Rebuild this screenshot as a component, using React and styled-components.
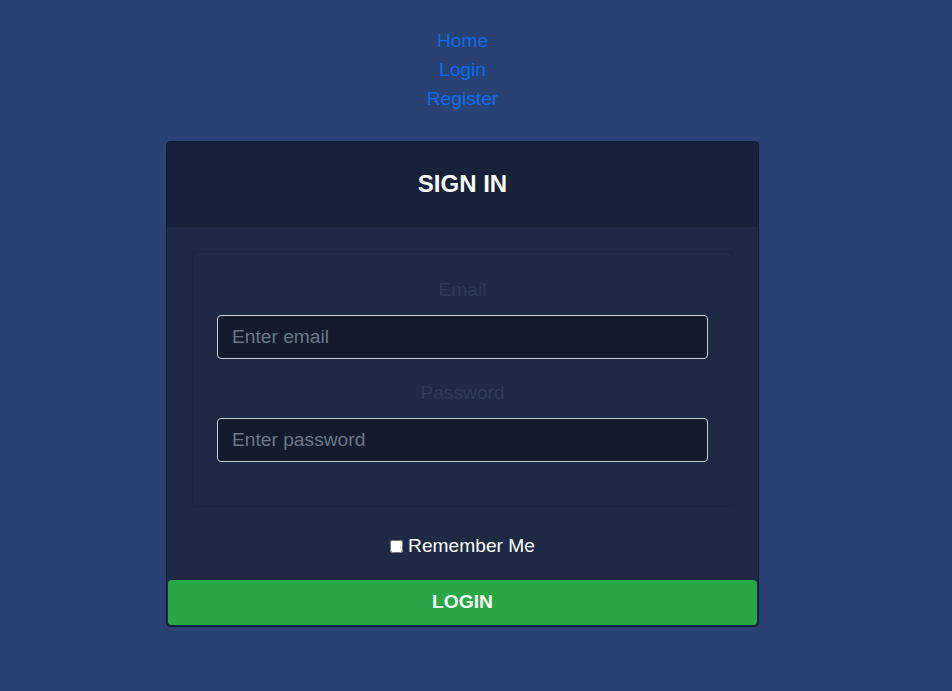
import React from 'react';
import styled, { createGlobalStyle } from 'styled-components';

const GlobalStyle = createGlobalStyle`
  html, body {
    margin: 0;
    background: #2a4173;
    font-family: "Liberation Sans", Arial, sans-serif;
  }
`;

const Page = styled.div`
  width: 925px;
  padding-top: 27px;
  display: flex;
  flex-direction: column;
  align-items: center;
`;

const Nav = styled.nav`
  display: flex;
  flex-direction: column;
  align-items: center;
  margin-bottom: 28px;
`;

const NavLink = styled.a`
  color: #0a6ff0;
  font-size: 19.2px;
  line-height: 28.8px;
  text-decoration: none;
`;

const Card = styled.div`
  width: 591px;
  border: 1px solid #121b2e;
  border-radius: 4px;
  background: #1e2945;
  overflow: hidden;
`;

const Header = styled.div`
  background: #17223a;
  color: #ffffff;
  text-align: center;
  font-weight: bold;
  font-size: 24px;
  line-height: 28px;
  padding: 28px 0 29px;
`;

const Body = styled.div`
  padding: 24px 25px 19px;
`;

const FieldBox = styled.div`
  border: 1px solid #1a2540;
  border-radius: 4px;
  padding: 24px 24px 24px;
`;

const Group = styled.div`
  display: flex;
  flex-direction: column;
  margin-bottom: 20px;
`;

const Label = styled.label`
  text-align: center;
  color: #2d3b58;
  font-size: 19.2px;
  line-height: 28.8px;
  margin-bottom: 10px;
`;

const Input = styled.input`
  box-sizing: border-box;
  height: 44px;
  width: 100%;
  background: #131a2c;
  border: 1px solid #c9ced6;
  border-radius: 4px;
  padding: 0 14px;
  color: #ffffff;
  font-family: inherit;
  font-size: 19.2px;
  outline: none;
  &::placeholder {
    color: #6b7887;
  }
`;

const CheckRow = styled.label`
  display: flex;
  justify-content: center;
  align-items: center;
  gap: 5px;
  margin-top: 25px;
  color: #ffffff;
  font-size: 19.2px;
  line-height: 28.8px;
  input {
    margin: 0;
    width: 13px;
    height: 13px;
  }
`;

const LoginButton = styled.button`
  display: block;
  width: calc(100% - 2px);
  margin: 0 1px 1px;
  height: 45px;
  border: none;
  border-radius: 4px;
  background: #28a745;
  color: #ffffff;
  font-family: inherit;
  font-weight: bold;
  font-size: 19.2px;
  cursor: pointer;
`;

export default function App() {
  return (
    <>
      <GlobalStyle />
      <Page>
        <Nav>
          <NavLink href="#">Home</NavLink>
          <NavLink href="#">Login</NavLink>
          <NavLink href="#">Register</NavLink>
        </Nav>
        <Card>
          <Header>SIGN IN</Header>
          <Body>
            <FieldBox>
              <Group>
                <Label htmlFor="email">Email</Label>
                <Input id="email" type="email" placeholder="Enter email" />
              </Group>
              <Group>
                <Label htmlFor="password">Password</Label>
                <Input id="password" type="password" placeholder="Enter password" />
              </Group>
            </FieldBox>
            <CheckRow>
              <input type="checkbox" />
              Remember Me
            </CheckRow>
          </Body>
          <LoginButton>LOGIN</LoginButton>
        </Card>
      </Page>
    </>
  );
}
